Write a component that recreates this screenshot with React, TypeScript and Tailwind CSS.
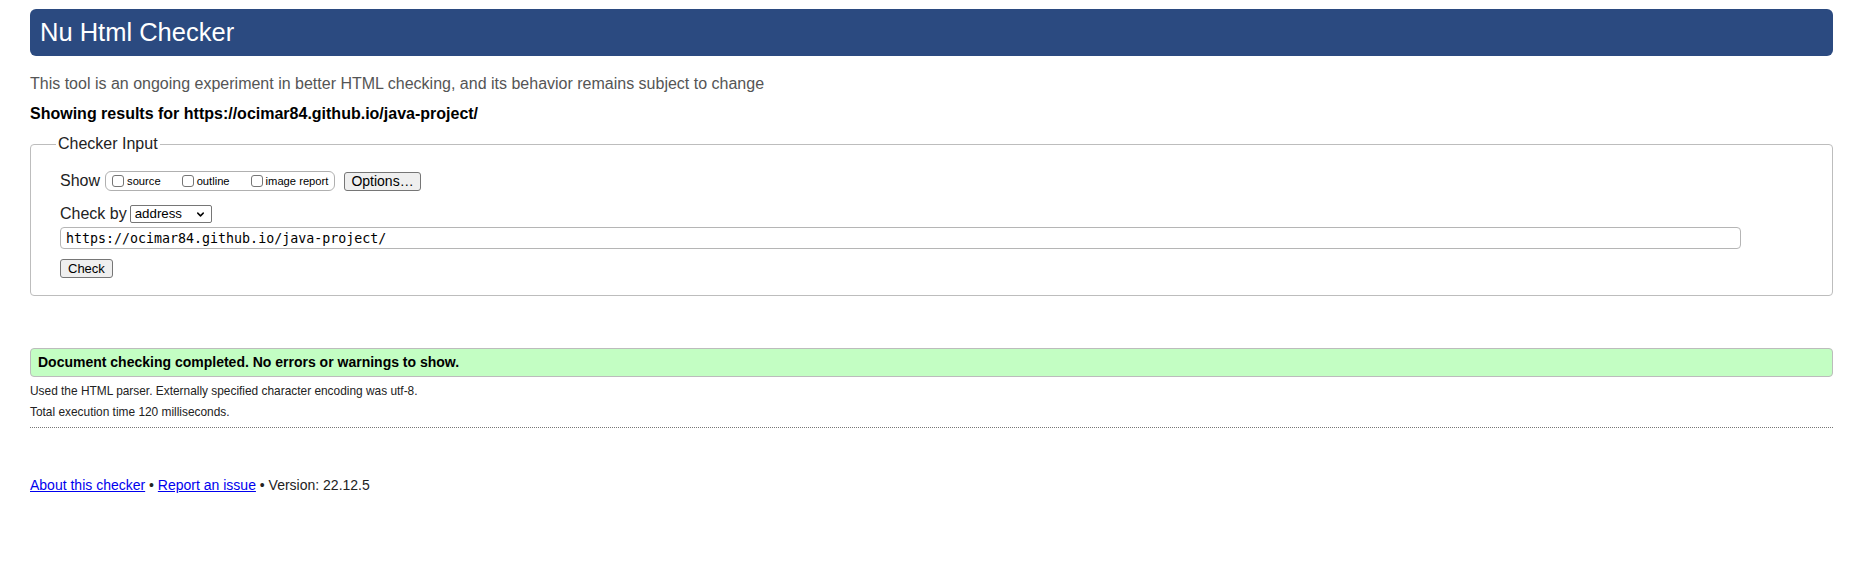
import { ChevronDown } from 'lucide-react';

const sans = { fontFamily: '"Liberation Sans", Arial, sans-serif' };

function Box({ label }: { label: string }) {
  return (
    <label className="flex items-center">
      <input
        type="checkbox"
        className="h-[12px] w-[12px] appearance-none rounded-[3px] border border-[#767676] bg-white"
      />
      <span className="ml-[3px] text-[11.2px] leading-[14px] text-black">{label}</span>
    </label>
  );
}

export default function App() {
  return (
    <div className="min-h-[583px] bg-white pt-[9px] pl-[30px] pr-[18px] text-[#222]" style={sans}>
      <header className="flex h-[47px] items-center rounded-[6px] bg-[#2b4a80] pl-[10px] pb-[1px]">
        <h1 className="text-[25.5px] leading-[30px] font-normal text-white">Nu Html Checker</h1>
      </header>

      <p className="mt-[18px] text-[16px] leading-[20px] text-[#555]">
        This tool is an ongoing experiment in better HTML checking, and its behavior remains subject to change
      </p>
      <p className="mt-[10px] text-[16px] leading-[20px] font-bold text-black">
        Showing results for https://ocimar84.github.io/java-project/
      </p>

      <fieldset className="mt-[11px] rounded-[4px] border border-[#bdbdbd] pl-[29px] pr-[91px] pt-[18px] pb-[17px]">
        <legend className="-ml-[4px] px-[2px] text-[16px] leading-[18px] text-[#222]">Checker Input</legend>

        <div className="flex h-[20px] items-center">
          <span className="mr-[5px] text-[16px] text-[#222]">Show</span>
          <div className="flex h-[20px] items-center gap-[21px] rounded-[6px] border border-[#b0b0b0] pl-[6px] pr-[6px]">
            <Box label="source" />
            <Box label="outline" />
            <Box label="image report" />
          </div>
          <button className="ml-[9px] flex h-[19px] items-center rounded-[3px] border border-[#767676] bg-[#efefef] px-[6px] text-[14px] text-black">
            Options…
          </button>
        </div>

        <div className="mt-[14px] flex h-[18px] items-center">
          <span className="mr-[3px] text-[16px] text-[#222]">Check by</span>
          <div className="flex h-[18px] w-[82px] items-center justify-between rounded-[2px] border border-[#767676] bg-white pl-[4px] pr-[5px] text-[13.3px] text-black">
            <span>address</span>
            <ChevronDown size={11} strokeWidth={3.2} />
          </div>
        </div>

        <input
          readOnly
          value="https://ocimar84.github.io/java-project/"
          className="mt-[4px] block h-[22px] w-full rounded-[4px] border border-[#b5b5b5] bg-white px-[5px] text-[13.3px] text-black"
          style={{ fontFamily: '"DejaVu Sans Mono", monospace' }}
        />

        <button className="mt-[10px] flex h-[19px] items-center rounded-[3px] border border-[#767676] bg-[#efefef] px-[7px] text-[13px] text-black">
          Check
        </button>
      </fieldset>

      <div className="mt-[52px] flex h-[29px] items-center rounded-[4px] border border-[#bcbcbc] bg-[#c3fec3] pl-[7px]">
        <p className="text-[14px] font-bold text-black">Document checking completed. No errors or warnings to show.</p>
      </div>

      <p className="mt-[7px] text-[11.9px] leading-[14px] text-[#222]">
        Used the HTML parser. Externally specified character encoding was utf-8.
      </p>
      <p className="mt-[7px] text-[11.9px] leading-[14px] text-[#222]">Total execution time 120 milliseconds.</p>

      <hr className="mt-[8px] border-0 border-t border-dotted border-[#777]" />

      <p className="mt-[49px] text-[14px] leading-[16px] text-[#222]">
        <a href="#" className="text-[#0000ee] underline">About this checker</a>
        {' • '}
        <a href="#" className="text-[#0000ee] underline">Report an issue</a>
        {' • Version: 22.12.5'}
      </p>
    </div>
  );
}
